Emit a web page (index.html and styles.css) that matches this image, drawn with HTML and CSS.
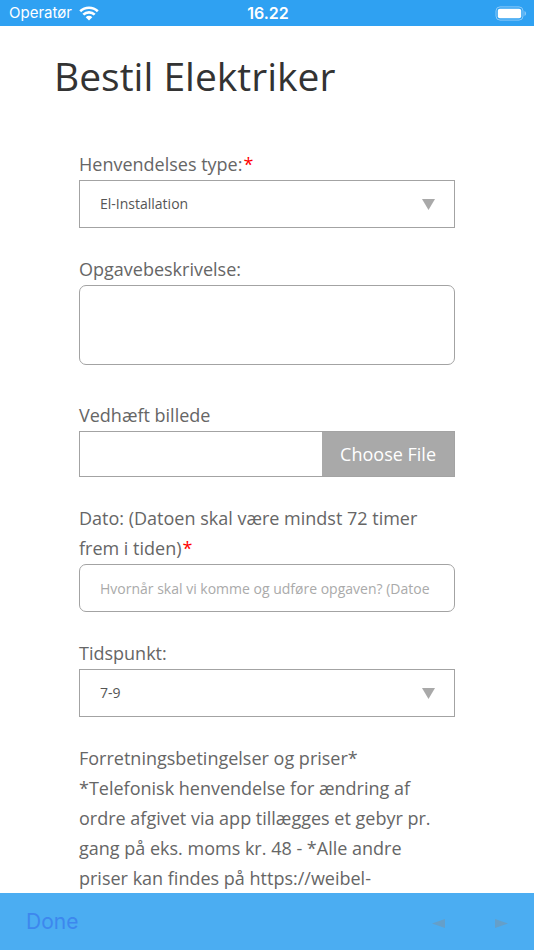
FILE: index.html
```html
<!DOCTYPE html>
<html lang="da">
<head>
<meta charset="utf-8">
<meta name="viewport" content="width=device-width, initial-scale=1">
<title>Bestil Elektriker</title>
<link rel="stylesheet" href="styles.css">
</head>
<body>
<header class="status">
  <div class="carrier">
    <span>Operatør</span>
    <svg class="wifi" viewBox="0 0 20 15" aria-hidden="true">
      <path d="M1.200 5.300a12.600 12.600 0 0 1 17.600 0" />
      <path d="M4.300 8.700a8.100 8.100 0 0 1 11.400 0" />
      <path class="dot" d="M6.700 11.200a4.700 4.700 0 0 1 6.600 0L10 14.600z" />
    </svg>
  </div>
  <span class="clock">16.22</span>
  <svg class="battery" viewBox="0 0 32 15" aria-hidden="true">
    <rect class="shell" x="1" y="0.9" width="27" height="13.2" rx="4" />
    <rect class="charge" x="2.8" y="2.8" width="23.4" height="9.4" rx="2" />
    <path class="cap" d="M29.5 5c2 .8 2 4.2 0 5z" />
  </svg>
</header>

<main class="page">
  <h1 class="title">Bestil Elektriker</h1>
  <form class="form">
    <div class="field">
      <label for="type">Henvendelses type:<span class="required">*</span></label>
      <div class="select">
        <select id="type" required><option>El-Installation</option></select>
        <svg class="arrow" viewBox="0 0 13 11" aria-hidden="true"><path d="M0 0h13L6.500 11z" /></svg>
      </div>
    </div>
    <div class="field field-area">
      <label for="description">Opgavebeskrivelse:</label>
      <textarea class="box rounded area" id="description"></textarea>
    </div>
    <div class="field">
      <label for="picture">Vedhæft billede</label>
      <div class="file">
        <span class="file-button">Choose File</span>
        <input class="file-input" id="picture" type="file">
      </div>
    </div>
    <div class="field">
      <label for="date">Dato: (Datoen skal være mindst 72 timer frem i tiden)<span class="required">*</span></label>
      <input class="box rounded" id="date" type="text" required placeholder="Hvornår skal vi komme og udføre opgaven? (Datoe">
    </div>
    <div class="field">
      <label for="time">Tidspunkt:</label>
      <div class="select">
        <select id="time"><option>7-9</option></select>
        <svg class="arrow" viewBox="0 0 13 11" aria-hidden="true"><path d="M0 0h13L6.500 11z" /></svg>
      </div>
    </div>
    <p class="terms">Forretningsbetingelser og priser*<br>*Telefonisk henvendelse for ændring af ordre afgivet via app tillægges et gebyr pr. gang på eks. moms kr. 48 - *Alle andre priser kan findes på https://weibel-</p>
  </form>
</main>

<footer class="toolbar">
  <button class="done" type="button">Done</button>
  <div class="steps">
    <button class="step" type="button" aria-label="Previous" disabled>
      <svg viewBox="0 0 13 9" aria-hidden="true"><path d="M13 0v9L0 4.500z" /></svg>
    </button>
    <button class="step" type="button" aria-label="Next" disabled>
      <svg viewBox="0 0 13 9" aria-hidden="true"><path d="M0 0v9l13-4.500z" /></svg>
    </button>
  </div>
</footer>
</body>
</html>
```
FILE: styles.css
```css
* {
  box-sizing: border-box;
}

body {
  margin: 0;
  height: 100vh;
  display: flex;
  flex-direction: column;
  overflow: hidden;
  background: #fff;
  color: #666;
  font: 18px/30px "Open Sans", sans-serif;
}

.status {
  flex: none;
  display: grid;
  grid-template-columns: 1fr auto 1fr;
  align-items: center;
  height: 26px;
  padding: 0 7px 0 9px;
  background: #2fa1f2;
  color: #fff;
  font: 15px/26px Inter, sans-serif;
}

.carrier {
  display: flex;
  align-items: center;
  gap: 7px;
}

.clock {
  font-size: 16px;
  font-weight: 600;
}

.wifi {
  width: 20px;
  height: 15px;
  fill: none;
  stroke: #fff;
  stroke-width: 2.6;
}

.wifi .dot {
  fill: #fff;
  stroke: none;
}

.battery {
  justify-self: end;
  width: 32px;
  height: 15px;
  fill: #fff;
}

.battery .shell {
  fill: none;
  stroke: #8ccaf8;
}

.battery .cap {
  fill: #8ccaf8;
}

.page {
  flex: 1;
  min-height: 0;
  overflow: auto;
  scrollbar-width: none;
  padding: 20px 54px 0;
}

.title {
  margin: 0 0 43px;
  color: #333;
  font-size: 39px;
  font-weight: 400;
  line-height: 60px;
}

.form {
  padding: 0 25px;
}

.field {
  display: flex;
  flex-direction: column;
  gap: 1px;
  margin-bottom: 26px;
}

.field-area {
  margin-bottom: 35px;
}

.required {
  padding-left: 1px;
  color: #f00;
}

.box,
.select select {
  width: 100%;
  height: 48px;
  margin: 0;
  padding: 0 20px;
  border: 1px solid #a3a3a3;
  border-radius: 0;
  background: #fff;
  color: #555;
  font: 14px/20px "Open Sans", sans-serif;
}

.box.rounded {
  border-radius: 7px;
}

.box::placeholder {
  color: #aaa;
}

.box.area {
  height: 80px;
  padding: 12px 20px;
  resize: none;
}

.select {
  position: relative;
}

.select select {
  display: block;
  appearance: none;
}

.arrow {
  position: absolute;
  top: 19px;
  right: 20px;
  width: 13px;
  height: 11px;
  fill: #a9a9a9;
  pointer-events: none;
}

.file {
  position: relative;
  display: flex;
  justify-content: flex-end;
  height: 46px;
  border: 1px solid #a3a3a3;
}

.file-button {
  padding: 0 18px;
  background: #a9a9a9;
  color: #fff;
  line-height: 44px;
}

.file-input {
  position: absolute;
  inset: 0;
  width: 100%;
  opacity: 0;
}

.terms {
  margin: 0;
}

.toolbar {
  flex: none;
  display: flex;
  align-items: center;
  justify-content: space-between;
  height: 57px;
  padding: 0 26px;
  background: #4badf2;
}

.done,
.step {
  margin: 0;
  padding: 0;
  border: 0;
  background: none;
}

.done {
  color: #3d87ee;
  font: 21px/30px Inter, sans-serif;
}

.steps {
  display: flex;
  gap: 50px;
  padding-top: 4px;
}

.step svg {
  display: block;
  width: 13px;
  height: 9px;
  fill: #659fc9;
}
```
